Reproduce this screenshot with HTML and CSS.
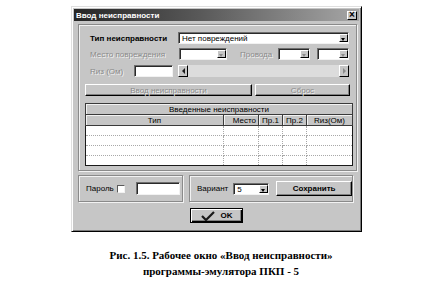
FILE: index.html
```html
<!DOCTYPE html>
<html lang="ru">
<head>
    <meta charset="UTF-8">
    <meta name="viewport" content="width=device-width, initial-scale=1.0">
    <title>Ввод неисправности</title>
    <link rel="stylesheet" href="styles.css">
</head>
<body>
    <div class="window">
        <div class="titlebar">
            <span class="title">Ввод неисправности</span>
            <span class="close-btn">×</span>
        </div>

        <div class="panel">
            <div class="row row-type">
                <span class="lbl bold lbl-type">Тип неисправности</span>
                <div class="combo w-type">
                    <span class="combo-text">Нет повреждений</span>
                    <span class="combo-arrow"></span>
                </div>
            </div>

            <div class="row row-place">
                <span class="lbl disabled lbl-place">Место повреждения</span>
                <div class="combo w-place"><span class="combo-text"></span><span class="combo-arrow off"></span></div>
                <span class="lbl disabled lbl-wires">Провода</span>
                <div class="combo w-wire"><span class="combo-text"></span><span class="combo-arrow off"></span></div>
                <div class="combo w-wire gap-wire"><span class="combo-text"></span><span class="combo-arrow off"></span></div>
            </div>

            <div class="row row-res">
                <span class="lbl disabled lbl-res">Rиз (Ом)</span>
                <div class="edit w-res"></div>
                <div class="scrollbar">
                    <span class="sb-btn"><span class="tri-left"></span></span>
                    <span class="sb-track"></span>
                    <span class="sb-btn"><span class="tri-right"></span></span>
                </div>
            </div>

            <div class="row row-actions">
                <div class="btn disabled w-enter">Ввод неисправности</div>
                <div class="btn disabled w-reset">Сброс</div>
            </div>

            <table class="grid">
                <colgroup>
                    <col class="c-type">
                    <col class="c-place">
                    <col class="c-w">
                    <col class="c-w">
                    <col class="c-res">
                </colgroup>
                <thead>
                    <tr><th colspan="5">Введенные неисправности</th></tr>
                    <tr>
                        <th>Тип</th>
                        <th class="right">Место</th>
                        <th>Пр.1</th>
                        <th>Пр.2</th>
                        <th>Rиз(Ом)</th>
                    </tr>
                </thead>
                <tbody>
                    <tr><td></td><td></td><td></td><td></td><td></td></tr>
                    <tr><td></td><td></td><td></td><td></td><td></td></tr>
                    <tr><td></td><td></td><td></td><td></td><td></td></tr>
                    <tr><td></td><td></td><td></td><td></td><td></td></tr>
                </tbody>
            </table>
        </div>

        <div class="bottom-row">
            <div class="group group-pass">
                <span class="lbl">Пароль</span>
                <span class="checkbox"></span>
                <div class="edit w-pass"></div>
            </div>
            <div class="group group-variant">
                <span class="lbl">Вариант</span>
                <div class="combo w-variant">
                    <span class="combo-text">5</span>
                    <span class="combo-arrow"></span>
                </div>
                <div class="btn w-save bold">Сохранить</div>
            </div>
        </div>

        <div class="ok-row">
            <div class="btn btn-ok">
                <svg width="14" height="10" viewBox="0 0 14 10">
                    <path d="M1 5 L5 9 L13 1" fill="none" stroke="#1a1a1a" stroke-width="2.2"/>
                </svg>
                <span class="bold">OK</span>
            </div>
        </div>
    </div>

    <p class="caption">
        Рис. 1.5. Рабочее окно «Ввод неисправности»<br>
        программы-эмулятора ПКП - 5
    </p>
</body>
</html>
```

FILE: styles.css
```css
* {
    box-sizing: border-box;
}

body {
    margin: 0;
    background-color: #fff;
    font-family: "Liberation Sans", Arial, sans-serif;
    font-size: 8px;
    color: #000;
}

.window {
    width: 291px;
    height: 226px;
    margin: 6px 0 0 71px;
    padding: 2px;
    background-color: #c6c6c6;
    border: 1px solid;
    border-color: #dfdfdf #000 #000 #dfdfdf;
    box-shadow: inset 1px 1px #fff, inset -1px -1px #7a7a7a;
}

.titlebar {
    height: 12px;
    display: flex;
    align-items: center;
    justify-content: space-between;
    padding: 0 2px 0 2px;
    background: linear-gradient(to right, #262626 0%, #5a5a5a 45%, #a6a6a6 100%);
}

.title {
    color: #fff;
    font-weight: bold;
    font-size: 8px;
}

.close-btn {
    width: 10px;
    height: 9px;
    display: flex;
    align-items: center;
    justify-content: center;
    background-color: #c6c6c6;
    border: 1px solid;
    border-color: #fff #000 #000 #fff;
    font-size: 10px;
    font-weight: bold;
    line-height: 1;
}

.bold {
    font-weight: bold;
}

.lbl {
    white-space: nowrap;
}

.disabled {
    color: #8a8a8a;
    text-shadow: 1px 1px #f2f2f2;
}

.panel {
    width: 279px;
    margin: 3px 0 0 4px;
    padding: 7px 0 4px 11px;
    border: 1px solid #8a8a8a;
    box-shadow: inset 1px 1px #f2f2f2, 1px 1px #f2f2f2;
}

.row {
    display: flex;
    align-items: center;
    height: 12px;
}

.row-place {
    margin-top: 4px;
}

.row-res {
    margin-top: 5px;
}

.row-actions {
    margin-top: 7px;
    margin-left: -5px;
    gap: 3px;
}

.lbl-type {
    width: 88px;
}

.lbl-place {
    width: 89px;
}

.lbl-wires {
    width: 38px;
    margin-left: 13px;
}

.lbl-res {
    width: 44px;
}

/* combo box */
.combo {
    height: 12px;
    display: flex;
    background-color: #fff;
    border: 1px solid;
    border-color: #6e6e6e #f2f2f2 #f2f2f2 #6e6e6e;
    box-shadow: inset 1px 1px #2a2a2a;
}

.combo-text {
    flex: 1;
    padding: 1px 0 0 3px;
    line-height: 9px;
    overflow: hidden;
    white-space: nowrap;
}

.combo-arrow {
    width: 9px;
    margin: 1px 0;
    position: relative;
    background-color: #c6c6c6;
    border: 1px solid;
    border-color: #fff #000 #000 #fff;
}

.combo-arrow::after {
    content: "";
    position: absolute;
    left: 1px;
    top: 3px;
    border-left: 2.5px solid transparent;
    border-right: 2.5px solid transparent;
    border-top: 3px solid #000;
}

.combo-arrow.off::after {
    border-top-color: #8a8a8a;
}

.w-type {
    width: 171px;
}

.w-place {
    width: 48px;
}

.w-wire {
    width: 32px;
}

.gap-wire {
    margin-left: 7px;
}

.w-variant {
    width: 37px;
    margin-left: 5px;
}

/* edit box */
.edit {
    height: 12px;
    background-color: #fff;
    border: 1px solid;
    border-color: #6e6e6e #f2f2f2 #f2f2f2 #6e6e6e;
    box-shadow: inset 1px 1px #2a2a2a;
}

.w-res {
    width: 39px;
}

.w-pass {
    width: 44px;
    height: 13px;
    margin-left: 11px;
}

/* scrollbar */
.scrollbar {
    width: 171px;
    height: 12px;
    margin-left: 5px;
    display: flex;
}

.sb-btn {
    width: 10px;
    display: flex;
    align-items: center;
    justify-content: center;
    background-color: #c6c6c6;
    border: 1px solid;
    border-color: #fff #000 #000 #fff;
}

.sb-track {
    flex: 1;
    background-color: #dcdcdc;
}

.tri-left {
    border-top: 3px solid transparent;
    border-bottom: 3px solid transparent;
    border-right: 3px solid #1a1a1a;
}

.tri-right {
    border-top: 3px solid transparent;
    border-bottom: 3px solid transparent;
    border-left: 3px solid #8a8a8a;
}

/* buttons */
.btn {
    height: 12px;
    display: flex;
    align-items: center;
    justify-content: center;
    background-color: #c6c6c6;
    border: 1px solid;
    border-color: #fff #000 #000 #fff;
    box-shadow: inset -1px -1px #808080;
}

.w-enter {
    width: 167px;
}

.w-reset {
    width: 95px;
}

.w-save {
    width: 78px;
    height: 15px;
    margin-left: 7px;
}

/* table */
.grid {
    width: 268px;
    margin: 7px 0 0 -5px;
    border-collapse: collapse;
    border: 1px solid #1a1a1a;
    table-layout: fixed;
}

.grid .c-type {
    width: 138px;
}

.grid .c-place {
    width: 35px;
}

.grid .c-w {
    width: 24px;
}

.grid th {
    height: 11px;
    padding: 0 2px;
    font-weight: normal;
    line-height: 9px;
    white-space: nowrap;
    overflow: hidden;
    background-color: #c6c6c6;
    border: 1px solid #3a3a3a;
    box-shadow: inset 1px 1px #f2f2f2;
}

.grid th.right {
    text-align: right;
}

.grid td {
    height: 10px;
    padding: 0;
    background-color: #fff;
    border: 1px dotted #a8a8a8;
}

/* bottom groups */
.bottom-row {
    display: flex;
    margin: 4px 0 0 4px;
}

.group {
    height: 27px;
    display: flex;
    align-items: center;
    padding-left: 7px;
    border: 1px solid #8a8a8a;
    box-shadow: inset 1px 1px #f2f2f2, 1px 1px #f2f2f2;
}

.group-pass {
    width: 105px;
}

.group-variant {
    width: 164px;
    margin-left: 6px;
}

.checkbox {
    width: 8px;
    height: 8px;
    margin-left: 3px;
    background-color: #fff;
    border: 1px solid;
    border-color: #5a5a5a #f2f2f2 #f2f2f2 #5a5a5a;
}

.ok-row {
    display: flex;
    justify-content: center;
    margin-top: 6px;
}

.btn-ok {
    width: 53px;
    height: 15px;
    gap: 6px;
    border: 1px solid #000;
    box-shadow: inset 1px 1px #fff, inset -1px -1px #000, inset -2px -2px #808080;
}

.caption {
    margin: 15px 0 0 6px;
    text-align: center;
    font-family: "Liberation Serif", "Times New Roman", serif;
    font-weight: bold;
    font-size: 11px;
    line-height: 16px;
}
```
